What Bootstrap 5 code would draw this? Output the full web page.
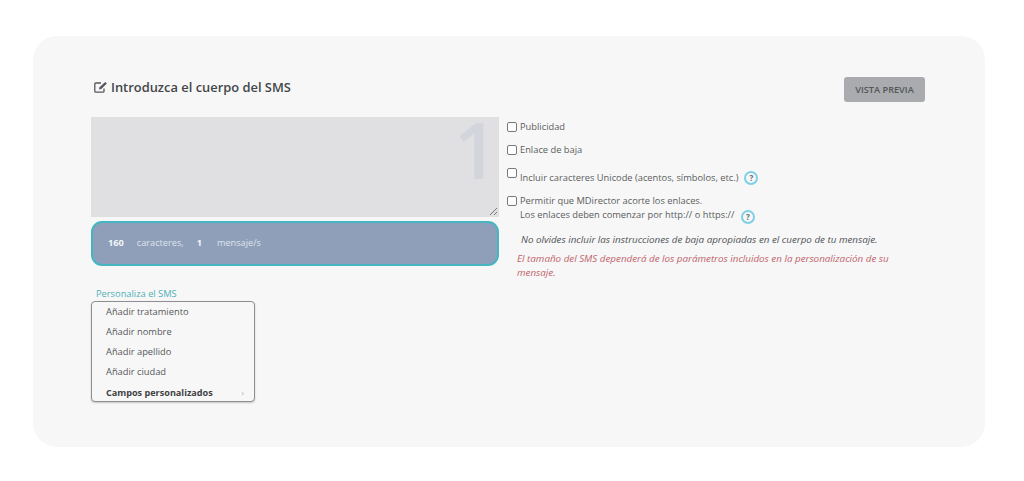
<!DOCTYPE html>
<html lang="es">
<head>
    <meta charset="UTF-8" />
    <title>Introduzca el cuerpo del SMS</title>
    <meta name="viewport" content="width=device-width, initial-scale=1" />
    <link href="https://cdn.jsdelivr.net/npm/bootstrap@5.3.0/dist/css/bootstrap.min.css" rel="stylesheet" />
    <style>
        html, body { height: 481px; overflow: hidden; }
        body { background: #fff; font-family: "Open Sans", "Liberation Sans", sans-serif; font-size: 9.3px; color: #5a5d60; padding: 36px 39px 34px 33px; }
        .sms-panel { background: #f7f7f7; border-radius: 24px; height: 411px; padding: 41px 60px 0 58px; }
        .sms-head { height: 40px; }
        .sms-title { font-size: 12.9px; font-weight: 600; color: #44474a; margin: 0 0 0 3px; line-height: 20px; }
        .sms-title svg { vertical-align: -1px; margin-right: 3px; }
        .sms-preview { background: #a9abaf; color: #54565a; border: 0; border-radius: 3px; font-size: 9.2px; font-weight: 600; width: 81px; height: 25px; padding: 0; }
        .sms-left { width: 408px; }
        .sms-area { height: 100px; background: #e0e0e2; position: relative; }
        .sms-count { position: absolute; right: 1px; top: -7px; font-size: 78px; font-weight: 600; line-height: 1; color: #d2d5dc; }
        .sms-grip { position: absolute; right: 1px; bottom: 1px; }
        .sms-bar { height: 45px; margin-top: 4px; background: #8f9fba; border: 2px solid #45b5c2; border-radius: 11px; color: #dfe3ea; padding: 0 0 2px 15px; gap: 13px; font-size: 9.2px; }
        .sms-bar b { color: #f4f5f8; font-weight: 700; }
        .sms-bar .sms-num { margin-right: 2px; }
        .sms-link { color: #4fb0b8; margin: 21px 0 0 5px; line-height: 14px; }
        .sms-menu { width: 164px; height: 101px; border: 1px solid #8c8e92; border-radius: 4px; box-shadow: 0 1px 2px rgba(0,0,0,.2); background: #f7f7f7; }
        .sms-menu div { height: 20px; line-height: 19px; padding: 0 10px 0 14px; color: #55585b; }
        .sms-menu .sms-strong { font-weight: 700; font-size: 9.1px; color: #3f4245; display: flex; justify-content: space-between; align-items: center; }
        .sms-caret { font-size: 9px; color: #b5b7ba; font-weight: 400; }
        .sms-right { margin-left: 8px; flex: 1; line-height: 14px; }
        .sms-check { width: 10px; height: 10px; border: 1px solid #77797c; border-radius: 2px; background: #fff; flex: none; margin-right: 3px; display: block; }
        .sms-opt { display: flex; align-items: center; height: 19px; }
        .sms-opt-second { margin-top: 4px; }
        .sms-opt-third { margin-top: 9px; }
        .sms-opt-third .sms-check { margin-top: -9px; }
        .sms-opt-fourth { height: 14px; margin-top: 7px; }
        .sms-sub { margin: 0 0 0 13px; }
        .sms-help { display: inline-block; width: 14px; height: 14px; line-height: 10px; border: 2px solid #7fd0e6; border-radius: 50%; text-align: center; font-size: 8px; font-weight: 700; color: #5d6b78; margin-left: 6px; vertical-align: -2px; }
        .sms-sub .sms-help { margin-left: 4px; }
        .sms-note { font-size: 9.8px; font-style: italic; color: #4f5256; margin: 9px 0 0 14px; }
        .sms-warn { font-size: 9.8px; font-style: italic; color: #c0626a; margin: 5px 0 0 10px; }
    </style>
</head>
<body>
    <div class="sms-panel">
        <div class="sms-head d-flex justify-content-between align-items-start">
            <h2 class="sms-title">
                <svg width="14" height="12" viewBox="0 0 14 12" fill="none" stroke="#55585b" stroke-width="1.3"><path d="M10 7.5V10.2a1 1 0 0 1-1 1H1.8a1 1 0 0 1-1-1V3a1 1 0 0 1 1-1H7"/><path d="M5 8.4l.5-2.2L11.2.9l1.7 1.7-5.6 5.3z" fill="#55585b" stroke="none"/></svg>Introduzca el cuerpo del SMS
            </h2>
            <button type="button" class="btn sms-preview">VISTA PREVIA</button>
        </div>
        <div class="d-flex">
            <div class="sms-left">
                <div class="sms-area">
                    <span class="sms-count">1</span>
                    <svg class="sms-grip" width="9" height="9" viewBox="0 0 9 9" stroke="#77797c" stroke-width="1"><path d="M1 8l7-7M5 8l3-3"/></svg>
                </div>
                <div class="sms-bar d-flex align-items-center">
                    <b>160</b><span>caracteres,</span><b class="sms-num">1</b><span>mensaje/s</span>
                </div>
                <div class="sms-link">Personaliza el SMS</div>
                <div class="sms-menu">
                    <div>Añadir tratamiento</div>
                    <div>Añadir nombre</div>
                    <div>Añadir apellido</div>
                    <div>Añadir ciudad</div>
                    <div class="sms-strong">Campos personalizados <span class="sms-caret">›</span></div>
                </div>
            </div>
            <div class="sms-right">
                <div class="sms-opt"><span class="sms-check"></span>Publicidad</div>
                <div class="sms-opt sms-opt-second"><span class="sms-check"></span>Enlace de baja</div>
                <div class="sms-opt sms-opt-third"><span class="sms-check"></span>Incluir caracteres Unicode (acentos, símbolos, etc.) <span class="sms-help">?</span></div>
                <div class="sms-opt sms-opt-fourth"><span class="sms-check"></span>Permitir que MDirector acorte los enlaces.</div>
                <div class="sms-sub">Los enlaces deben comenzar por http:// o https:// <span class="sms-help">?</span></div>
                <p class="sms-note">No olvides incluir las instrucciones de baja apropiadas en el cuerpo de tu mensaje.</p>
                <p class="sms-warn">El tamaño del SMS dependerá de los parámetros incluidos en la personalización de su mensaje.</p>
            </div>
        </div>
    </div>
    <script src="https://cdn.jsdelivr.net/npm/bootstrap@5.3.0/dist/js/bootstrap.bundle.min.js"></script>
</body>
</html>
